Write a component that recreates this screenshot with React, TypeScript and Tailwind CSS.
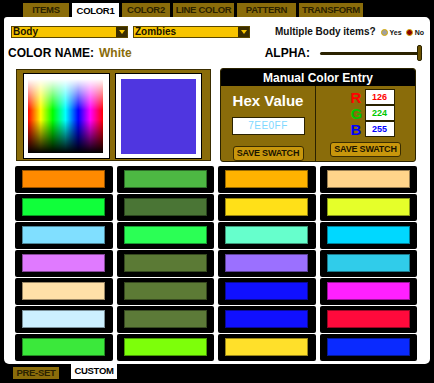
import React from "react";

const swatches = [
  ["#ff8a00", "#4db843", "#ffb300", "#ffd48a"],
  ["#10ff3a", "#4a7535", "#ffe018", "#e5ff2a"],
  ["#80dfff", "#2bff55", "#66ffcc", "#00d8ff"],
  ["#e07aff", "#5b7a35", "#9b70ff", "#30ccea"],
  ["#ffe0a8", "#5c7a35", "#1010ff", "#ff20ff"],
  ["#ccf0ff", "#5c7a38", "#1010ff", "#ff0a3c"],
  ["#3be83b", "#7dff0a", "#ffe02a", "#0a2aff"],
];

const font = "font-['Liberation_Sans',Arial,sans-serif]";

function Tab({ label, active, w }: { label: string; active?: boolean; w: string }) {
  return (
    <div
      className={`${w} flex items-center justify-center whitespace-nowrap text-[9.5px] tracking-[-0.3px] font-bold leading-none ${
        active ? "bg-white text-black h-[15px]" : "bg-[#8a6c0a] text-[#2b2200] h-[14px]"
      }`}
    >
      {label}
    </div>
  );
}

function Dropdown({ label }: { label: string }) {
  return (
    <div className="w-[117px] h-[12px] bg-[#f7c400] border border-[#5a4700] flex items-center">
      <span className="flex-1 pl-[1px] text-[10px] font-bold leading-none text-[#1a1400]">{label}</span>
      <div className="w-[11px] h-full bg-[#3a2d00] flex items-center justify-center">
        <div className="w-0 h-0 border-l-[3px] border-r-[3px] border-t-[4px] border-l-transparent border-r-transparent border-t-[#f7c400]" />
      </div>
    </div>
  );
}

function SaveButton({ w }: { w: string }) {
  return (
    <div
      className={`${w} h-[15px] bg-[#c8960c] border border-[#3a2d00] rounded-[3px] flex items-center justify-center whitespace-nowrap text-[9px] tracking-[-0.2px] font-bold leading-none text-[#1a1400]`}
    >
      SAVE SWATCH
    </div>
  );
}

export default function App() {
  return (
    <div className={`w-[434px] h-[383px] bg-black overflow-hidden relative ${font}`}>
      {/* top tabs */}
      <div className="flex items-start pt-[3px] pl-[23px] gap-[3px] h-[17px]">
        <Tab label="ITEMS" w="w-[46px]" />
        <Tab label="COLOR1" w="w-[47px]" active />
        <Tab label="COLOR2" w="w-[48px]" />
        <Tab label="LINE COLOR" w="w-[61px]" />
        <Tab label="PATTERN" w="w-[59px]" />
        <Tab label="TRANSFORM" w="w-[64px]" />
      </div>

      {/* main panel */}
      <div className="ml-[4px] w-[426px] h-[347px] bg-white rounded-[5px] rounded-tl-[3px] flex flex-col">
        {/* dropdown row */}
        <div className="flex items-center pl-[7px] pt-[9px] h-[21px]">
          <Dropdown label="Body" />
          <div className="w-[5px]" />
          <Dropdown label="Zombies" />
          <div className="ml-[25px] flex items-center text-[10px] font-bold leading-none text-[#111]">
            <span>Multiple Body items?</span>
            <span className="ml-[5px] w-[7px] h-[7px] rounded-full bg-[#a0a0a0] border-[1.5px] border-[#d4a800]" />
            <span className="ml-[2px] text-[7px]">Yes</span>
            <span className="ml-[4px] w-[7px] h-[7px] rounded-full bg-[#8a0000] border-[1.5px] border-[#d4a800]" />
            <span className="ml-[2px] text-[7px]">No</span>
          </div>
        </div>

        {/* color name / alpha row */}
        <div className="flex items-center h-[30px] pl-[4px]">
          <span className="text-[12px] font-bold text-black leading-none">COLOR NAME:</span>
          <span className="ml-[5px] text-[12px] font-bold text-[#8a6c0a] leading-none">White</span>
          <span className="ml-[133px] text-[12px] font-bold text-black leading-none">ALPHA:</span>
          <div className="ml-[10px] relative w-[102px] h-[16px] flex items-center">
            <div className="w-full h-[3px] bg-[#2a2200] rounded-full" />
            <div className="absolute right-0 top-0 w-[5px] h-[16px] bg-[#6b5200] border border-[#2a2200] rounded-[2px]" />
          </div>
        </div>

        {/* boxes row */}
        <div className="flex items-start pl-[12px] h-[95px]">
          <div className="mt-[1px] w-[195px] h-[92px] bg-[#8a6c0a] border border-[#3a2d00] flex items-start pl-[6px] pt-[3px] gap-[5px]">
            <div className="w-[87px] h-[86px] bg-white border border-black pl-[4px] pt-[5px]">
              <div className="w-[75px] h-[74px] bg-[image:linear-gradient(to_bottom,#ffffff_0%,rgba(255,255,255,0)_42%,rgba(0,0,0,0)_55%,#000000_100%),linear-gradient(to_right,#ff0000_0%,#ffff00_17%,#00ff00_33%,#00ffff_50%,#0000ff_67%,#ff00ff_83%,#ff0000_100%)]" />
            </div>
            <div className="w-[87px] h-[86px] bg-white border border-black pl-[5px] pt-[5px]">
              <div className="w-[75px] h-[75px] bg-[#4f36e0]" />
            </div>
          </div>
          <div className="ml-[9px] w-[196px] h-[94px] bg-[#8a6c0a] border border-[#2a2200] rounded-[3px] overflow-hidden flex flex-col">
            <div className="h-[17px] bg-black text-white text-[12px] font-bold flex items-center justify-center leading-none">
              Manual Color Entry
            </div>
            <div className="flex flex-1">
              <div className="w-[95px] border-r border-[#2a2200] flex flex-col items-center">
                <div className="mt-[7px] text-[15px] font-bold text-white leading-none">Hex Value</div>
                <div className="mt-[9px] w-[73px] h-[18px] bg-white border border-[#2a2200] flex items-center justify-center text-[10px] text-[#7ed8ff] leading-none tracking-[0.5px]">
                  7EE0FF
                </div>
                <div className="mt-[11px]">
                  <SaveButton w="w-[71px]" />
                </div>
              </div>
              <div className="flex-1 flex flex-col items-center">
                <div className="mt-[3px] flex flex-col ml-[14px]">
                  {[
                    ["R", "126", "text-[#ff0000]", "text-[#ff0000]"],
                    ["G", "224", "text-[#00c800]", "text-[#00c800]"],
                    ["B", "255", "text-[#0000ff]", "text-[#0000ff]"],
                  ].map(([l, v, c1, c2]) => (
                    <div key={l} className="flex items-center h-[16px]">
                      <span className={`w-[14px] text-[15px] font-bold leading-[15px] ${c1}`}>{l}</span>
                      <div className={`w-[30px] h-[16px] bg-white border border-[#2a2200] flex items-center justify-center text-[9px] font-bold leading-none ${c2}`}>
                        {v}
                      </div>
                    </div>
                  ))}
                </div>
                <div className="mt-[5px]">
                  <SaveButton w="w-[71px]" />
                </div>
              </div>
            </div>
          </div>
        </div>

        {/* swatch grid */}
        <div className="ml-[11px] mt-[3px] w-[402px] grid grid-cols-4 gap-x-[4px] gap-y-[1px]">
          {swatches.flat().map((c, i) => (
            <div key={i} className="h-[27px] bg-black rounded-[2px] flex items-center justify-center">
              <div
                className="w-[83px] h-[18px] border border-black/40 -mt-[1px]"
                style={{ backgroundColor: c }}
              />
            </div>
          ))}
        </div>
      </div>

      {/* bottom tabs */}
      <div className="flex items-start pl-[13px] gap-[12px]">
        <div className="mt-[3px] w-[46px] h-[12px] bg-[#8a6c0a] text-[#2b2200] text-[9.5px] tracking-[-0.3px] font-bold flex items-center justify-center leading-none">
          PRE-SET
        </div>
        <div className="-mt-[1px] w-[46px] h-[16px] bg-white text-black text-[9.5px] tracking-[-0.3px] font-bold flex items-center justify-center leading-none">
          CUSTOM
        </div>
      </div>
    </div>
  );
}
